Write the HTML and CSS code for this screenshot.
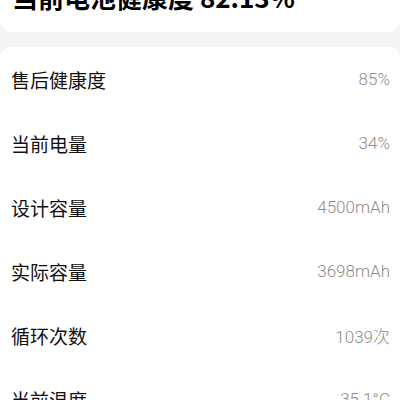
FILE: index.html
```html
<!DOCTYPE html>
<html lang="zh-CN">
<head>
    <meta charset="UTF-8">
    <meta name="viewport" content="width=device-width, initial-scale=1.0">
    <title>电池信息</title>
    <link rel="stylesheet" href="styles.css">
</head>
<body>
    <div class="card summary">
        <h1 class="health">当前电池健康度 82.13%</h1>
    </div>

    <div class="card list">
        <div class="row">
            <span class="label">售后健康度</span>
            <span class="value">85%</span>
        </div>
        <div class="row">
            <span class="label">当前电量</span>
            <span class="value">34%</span>
        </div>
        <div class="row">
            <span class="label">设计容量</span>
            <span class="value">4500mAh</span>
        </div>
        <div class="row">
            <span class="label">实际容量</span>
            <span class="value">3698mAh</span>
        </div>
        <div class="row">
            <span class="label">循环次数</span>
            <span class="value">1039次</span>
        </div>
        <div class="row">
            <span class="label">当前温度</span>
            <span class="value">35.1°C</span>
        </div>
    </div>
</body>
</html>
```

FILE: styles.css
```css
body {
    margin: 0;
    background-color: #F5F5F5;
    color: #111111;
    font-family: "Noto Sans CJK SC", "Noto Sans", sans-serif;
    overflow: hidden;
}
.card {
    background-color: #FFFFFF;
    border-radius: 12px;
}
.summary {
    margin-top: -23px;
    padding: 0 12px 16px;
    margin-bottom: 15px;
}
.health {
    margin: 0;
    font-size: 26px;
    line-height: 39px;
    font-weight: bold;
    color: #000000;
}
.row {
    height: 64px;
    padding: 0 10px 0 11px;
    display: flex;
    align-items: center;
    justify-content: space-between;
}
.label {
    font-size: 19px;
    color: #111111;
}
.value {
    font-family: "Roboto", "Noto Sans CJK SC", sans-serif;
    font-weight: 300;
    font-size: 17px;
    color: #8C8C8C;
}
```
